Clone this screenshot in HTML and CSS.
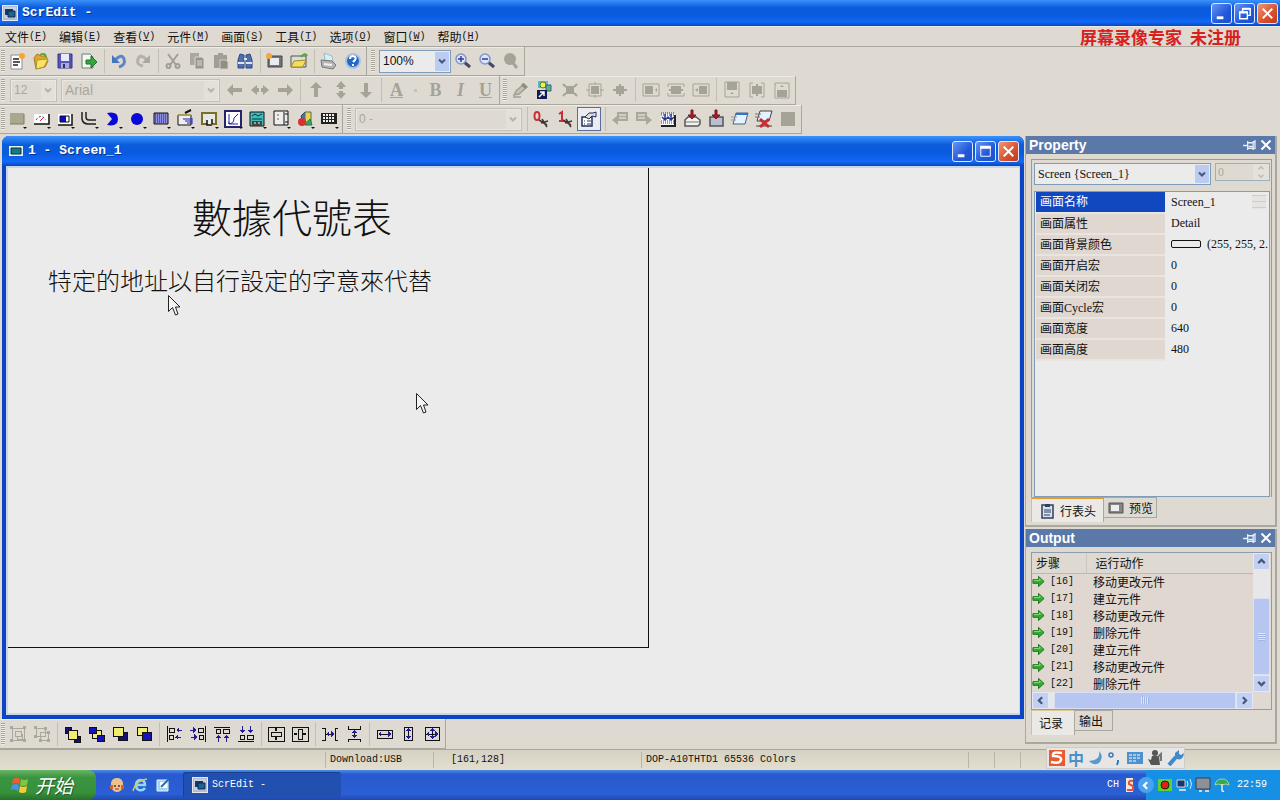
FILE: index.html
```html
<!DOCTYPE html>
<html lang="zh-CN">
<head>
<meta charset="utf-8">
<title>ScrEdit -</title>
<link rel="stylesheet" href="styles.css">
</head>
<body>
<svg class="defs" aria-hidden="true">
  <symbol id="chev" viewBox="0 0 10 10"><path d="M2 3.500 5 6.500 8 3.500" fill="none" stroke="currentColor" stroke-width="2"/></symbol>
  <symbol id="app" viewBox="0 0 16 16"><path d="M0 0h16v16H0z" fill="#e4e8ee"/><path d="M1 1h14v14H1z" fill="#b4bccb"/><path d="M2 2h12v11H2z" fill="#c5d0e0"/><path d="M3 4h8v6H3z" fill="#153b66"/><path d="M6 6h7v6H6z" fill="#1f6394" stroke="#0d2850"/></symbol>
  <symbol id="pin" viewBox="0 0 16 12"><path d="M1 6h5M6 1v10M6 3h6v6H6M12 2v8l2-1V1zM7 7h5" fill="none" stroke="#e8eef8" stroke-width="1.4"/></symbol>
  <symbol id="cross" viewBox="0 0 12 12"><path d="M1.500 1.500 10.500 10.500M10.500 1.500 1.500 10.500" stroke="#fff" stroke-width="2"/></symbol>
  <symbol id="go" viewBox="0 0 14 14"><path d="M1 5h6V1.500L13 7l-6 5.500V9H1z" fill="#2fae2f" stroke="#17701d"/><path d="M2 6h6V4l2 2" fill="none" stroke="#8be07c"/></symbol>
  <symbol id="ptr" viewBox="0 0 13 21"><path d="M.5.500v16l4-4 3 7.500 2.500-1L7.500 12H12z" fill="#f4f4f4" stroke="#222"/></symbol>
  <symbol id="left" viewBox="0 0 20 20"><path d="M2 10 8 4v4h9v4H8v4z" fill="#a5a297"/></symbol>
  <symbol id="note" viewBox="0 0 20 20"><path d="M7 3h11v9H8v4l-6-5 5-4z" fill="#aaa79d"/><path d="M9 6h7M9 9h7" stroke="#dedad2" stroke-width="1.500"/></symbol>
  <symbol id="dl" viewBox="0 0 20 20"><path d="M9 1h2v5h3l-4 4-4-4h3z" fill="#a51a24" stroke="#7c1820"/></symbol>
  <symbol id="mag" viewBox="0 0 20 20"><path d="m11 11 6 5" stroke="#444766" stroke-width="3"/><circle cx="8" cy="8" r="5" fill="#dce6fa" stroke="#8593ce" stroke-width="1.500"/></symbol>
</svg>

<header class="titlebar">
  <svg class="i16"><use href="#app"/></svg>
  <h1>ScrEdit -</h1>
  <div class="winbtns">
    <button class="wb" aria-label="最小化"><svg viewBox="0 0 20 20"><path d="M5 13h7v3H5z" fill="#fff"/></svg></button>
    <button class="wb" aria-label="还原"><svg viewBox="0 0 20 20"><path d="M8 8V5h8v7h-3M5 8.500h8v7H5z" fill="none" stroke="#fff" stroke-width="1.500"/><path d="M5 9h8M8 5h8" stroke="#fff" stroke-width="2"/></svg></button>
    <button class="wb close" aria-label="关闭"><svg viewBox="0 0 20 20"><path d="m5 5 10 10M15 5 5 15" stroke="#fff" stroke-width="2"/></svg></button>
  </div>
</header>

<nav class="menubar">
  <button>文件<span>(<u>F</u>)</span></button>
  <button>编辑<span>(<u>E</u>)</span></button>
  <button>查看<span>(<u>V</u>)</span></button>
  <button>元件<span>(<u>M</u>)</span></button>
  <button>画面<span>(<u>S</u>)</span></button>
  <button>工具<span>(<u>T</u>)</span></button>
  <button>选项<span>(<u>O</u>)</span></button>
  <button>窗口<span>(<u>W</u>)</span></button>
  <button>帮助<span>(<u>H</u>)</span></button>
  <strong class="mark"><span>屏幕录像专家</span> <span>未注册</span></strong>
</nav>

<div class="bars">
<div class="bar">
  <div class="tb"><i class="grip"></i>
    <button aria-label="新建"><svg viewBox="0 0 20 20"><path d="M4 4h11v14H4z" fill="#fff" stroke="#888c99"/><path d="M6 8h6M6 11h7M6 14h5" stroke="#222" stroke-width="1.500"/><circle cx="15" cy="5" r="3" fill="#f4a634"/></svg></button>
    <button aria-label="打开"><svg viewBox="0 0 20 20"><path d="m3 7 3-4 4 2 5 0 2 5-3 6-9 2z" fill="#e0a62c" stroke="#a87d20"/><path d="m6 9 11-1-4 8-8 2z" fill="#f7e26a" stroke="#b69528"/><path d="M9 4q5-3 6 2" fill="none" stroke="#54a53c" stroke-width="2"/></svg></button>
    <button aria-label="保存"><svg viewBox="0 0 20 20"><path d="M3 3h14v14H3z" fill="#5656b4" stroke="#333587"/><path d="M6 3h8v7H6z" fill="#e8eaf8"/><path d="M6 12h8v5H6z" fill="#a8abd8"/><path d="M8 13h2v4H8z" fill="#30316b"/></svg></button>
    <button aria-label="导出"><svg viewBox="0 0 20 20"><path d="M3 3h8l3 3v11H3z" fill="#f4f7f2" stroke="#5f8570"/><path d="M7 9h5V5l6 6-6 6v-4H7z" fill="#35a53c" stroke="#1f702d"/></svg></button>
    <i class="sep"></i>
    <button aria-label="撤消"><svg viewBox="0 0 20 20"><path d="M6 9q7-7 9-1t-5 8" fill="none" stroke="#5b86cb" stroke-width="3"/><path d="M3 4v8h8z" fill="#4675c0"/></svg></button>
    <button aria-label="重做"><svg viewBox="0 0 20 20"><path d="M14 9Q7 2 5 8t5 7" fill="none" stroke="#b4b1a8" stroke-width="3"/><path d="M17 4v8H9z" fill="#aaa79e"/></svg></button>
    <i class="sep"></i>
    <button aria-label="剪切"><svg viewBox="0 0 20 20"><path d="m5 3 8 11M15 3 7 14" stroke="#a19e95" stroke-width="2"/><circle cx="5.500" cy="15" r="2" fill="none" stroke="#a19e95" stroke-width="2"/><circle cx="14.500" cy="15" r="2" fill="none" stroke="#a19e95" stroke-width="2"/></svg></button>
    <button aria-label="复制"><svg viewBox="0 0 20 20"><path d="M3 2h9v12H3z" fill="#aaa79e"/><path d="M8 6h7l2 2v10H8z" fill="#98958c" stroke="#dad7ce"/><path d="M10 10h5M10 12h5M10 14h5" stroke="#dad7ce"/></svg></button>
    <button aria-label="粘贴"><svg viewBox="0 0 20 20"><path d="M3 4h13v13H3zM7 2h5v3H7z" fill="#a19e95"/><path d="M9 9h6l2 2v7H9z" fill="#918e85" stroke="#d0cdc4"/></svg></button>
    <button aria-label="查找"><svg viewBox="0 0 20 20"><path d="m5 3 4 1v13H3V9zM15 3l-4 1v13h6V9z" fill="#506fae" stroke="#2c4984"/><path d="M3 12h6M11 12h6M9 8h3" stroke="#dce6fa" stroke-width="2"/></svg></button>
    <i class="sep"></i>
    <button aria-label="新建画面"><svg viewBox="0 0 20 20"><path d="M3 5h14v11H3z" fill="#74767c" stroke="#444"/><path d="M5 7h9v7H5z" fill="#e9ebf0"/><circle cx="4" cy="5" r="3" fill="#efa93e"/></svg></button>
    <button aria-label="打开画面"><svg viewBox="0 0 20 20"><path d="M2 5h15v11H2z" fill="#ddd" stroke="#555"/><path d="m5 10 12-1-3 7H2z" fill="#f3dc5e" stroke="#a08a28"/><path d="M12 6q4-5 6-1" fill="none" stroke="#54a53c" stroke-width="2"/></svg></button>
    <i class="sep"></i>
    <button aria-label="打印"><svg viewBox="0 0 20 20"><path d="m5 2 8 3 1 6-8-2z" fill="#d9edf4" stroke="#9dbac4"/><path d="m2 9 11 1 4 4-3 4-11-2z" fill="#b5b6b0" stroke="#777"/><path d="m5 13 8 1" stroke="#f0f0f0" stroke-width="2"/></svg></button>
    <button aria-label="帮助"><svg viewBox="0 0 20 20"><circle cx="10" cy="10" r="7" fill="#2467c5" stroke="#a9c2e4" stroke-width="2"/><path d="M7 8q0-3 3-3 4 1 2 4l-2 2M10 13v2" fill="none" stroke="#fff" stroke-width="2"/></svg></button>
  </div>
  <div class="tb"><i class="grip"></i>
    <label class="combo zoomsel"><select aria-label="缩放"><option>100%</option></select><span class="arr"><svg><use href="#chev"/></svg></span></label>
    <button aria-label="放大"><svg viewBox="0 0 20 20"><use href="#mag"/><path d="M5 8h6M8 5v6" stroke="#333a8c" stroke-width="1.500"/></svg></button>
    <button aria-label="缩小"><svg viewBox="0 0 20 20"><use href="#mag"/><path d="M5 8h6" stroke="#333a8c" stroke-width="1.500"/></svg></button>
    <button aria-label="还原缩放"><svg viewBox="0 0 20 20"><circle cx="9" cy="8" r="6" fill="#a5a297"/><path d="m12 12 4 5" stroke="#a5a297" stroke-width="3"/></svg></button>
  </div>
</div>

<div class="bar wide">
  <div class="tb"><i class="grip"></i>
    <label class="combo off size"><select disabled aria-label="字号"><option>12</option></select><span class="arr"><svg><use href="#chev"/></svg></span></label>
    <label class="combo off face"><select disabled aria-label="字体"><option>Arial</option></select><span class="arr"><svg><use href="#chev"/></svg></span></label>
    <button aria-label="左"><svg><use href="#left"/></svg></button>
    <button aria-label="水平居中"><svg viewBox="0 0 20 20"><path d="m1 10 6-5v3h2v4H7v3zM19 10l-6-5v3h-2v4h2v3z" fill="#a5a297"/></svg></button>
    <button aria-label="右"><svg class="flip"><use href="#left"/></svg></button>
    <i class="sep"></i>
    <button aria-label="上"><svg class="cw"><use href="#left"/></svg></button>
    <button aria-label="垂直居中"><svg viewBox="0 0 20 20"><path d="m10 1 5 6h-3v2H8V7H5zM10 19l-5-6h3v-2h4v2h3z" fill="#a5a297"/></svg></button>
    <button aria-label="下"><svg class="ccw"><use href="#left"/></svg></button>
    <i class="sep"></i>
    <button class="let under">A</button><i class="dot"></i>
    <button class="let">B</button><button class="let it">I</button><button class="let under">U</button>
  </div>
  <div class="tb"><i class="grip"></i>
    <button aria-label="画笔"><svg viewBox="0 0 20 20"><path d="m4 15 2-4 8-7 3 3-8 7zM3 17h8" fill="#c4c1b7" stroke="#a19e95" stroke-width="1.500"/><path d="m12 4 4 4" stroke="#8d8a81" stroke-width="3"/></svg></button>
    <button aria-label="图片"><svg viewBox="0 0 20 20"><path d="M3 1h10v7H3z" fill="#54b8d0"/><circle cx="8" cy="5" r="3" fill="#f4ec4d" stroke="#508526"/><path d="M11 5h5v6h-5z" fill="#65b35a" stroke="#2863ad"/><path d="M2 10h10v9H2z" fill="#111a53"/><path d="m4 17 5-5M5 12h4v4" fill="none" stroke="#fff" stroke-width="1.500"/></svg></button>
    <button aria-label="缩放框"><svg viewBox="0 0 20 20"><path d="M6 6h8v8H6z" fill="#a5a297"/><path d="m3 4 3 3M17 4l-3 3M3 16l3-3M17 16l-3-3" stroke="#a5a297" stroke-width="2"/></svg></button>
    <button aria-label="外框"><svg viewBox="0 0 20 20"><path d="M6 6h8v8H6z" fill="#a5a297"/><path d="M4 4h12v12H4zM10 2v3M10 15v3M1 10h4M15 10h4" fill="none" stroke="#a5a297"/></svg></button>
    <button aria-label="居中"><svg viewBox="0 0 20 20"><path d="M6 6h8v8H6z" fill="#a5a297"/><path d="M10 4v12M3 10h14" stroke="#a5a297" stroke-width="2"/></svg></button>
    <i class="sep"></i>
    <button aria-label="靠左"><svg viewBox="0 0 20 20"><path d="M2 4h16v12H2z" fill="none" stroke="#a5a297"/><path d="M4 6h8v8H4zM14 10l2-2v4z" fill="#a5a297"/></svg></button>
    <button aria-label="水平中"><svg viewBox="0 0 20 20"><path d="M2 7V4h16v3M2 13v3h16v-3" fill="none" stroke="#a5a297"/><path d="M5 6h10v8H5zM3 9h14v2H3z" fill="#a5a297"/></svg></button>
    <button aria-label="靠右"><svg viewBox="0 0 20 20"><path d="M2 4h16v12H2z" fill="none" stroke="#a5a297"/><path d="M8 6h8v8H8zM4 10l3-2v4z" fill="#a5a297"/></svg></button>
    <i class="sep"></i>
    <button aria-label="靠上"><svg viewBox="0 0 20 20"><path d="M3 2h14v15H3z" fill="none" stroke="#a5a297"/><path d="M5 2h10v8H5zM10 12l2 2H8z" fill="#a5a297"/></svg></button>
    <button aria-label="垂直中"><svg viewBox="0 0 20 20"><path d="M6 3H3v14h3M14 3h3v14h-3" fill="none" stroke="#a5a297"/><path d="M5 6h10v8H5zM9 4h2v12H9z" fill="#a5a297"/></svg></button>
    <button aria-label="靠下"><svg viewBox="0 0 20 20"><path d="M3 3h14v15H3z" fill="none" stroke="#a5a297"/><path d="M5 10h10v7H5zM10 5l2 2H8z" fill="#a5a297"/></svg></button>
  </div>
</div>

<div class="bar">
  <div class="tb elems"><i class="grip"></i>
    <button aria-label="按钮"><svg viewBox="0 0 20 20"><path d="M3 4h14v11H3z" fill="#aaa78f"/><path d="M3 15h14V5" fill="none" stroke="#7c7a66"/></svg></button>
    <button aria-label="仪表"><svg viewBox="0 0 20 20"><path d="M3 5h14v10H3z" fill="#fff"/><path d="M3 15h15V5" fill="none" stroke="#111" stroke-width="1.500"/><path d="M5 11q5-7 10 0" fill="none" stroke="#338" stroke-dasharray="2"/><path d="m9 12 4-4" stroke="#d22"/></svg></button>
    <button aria-label="棒状图"><svg viewBox="0 0 20 20"><path d="M3 5h14v11H3z" fill="#fff"/><path d="M3 16h14V5" fill="none" stroke="#111" stroke-width="1.500"/><path d="M5 7h6v6H5z" fill="#0808d8"/><path d="M5 7h9v6H5z" fill="none" stroke="#111"/></svg></button>
    <button aria-label="管道"><svg viewBox="0 0 20 20"><path d="M3 3v7q1 5 6 5h8M7 3v5q0 3 3 3h7" fill="none" stroke="#222" stroke-width="1.500"/></svg></button>
    <button aria-label="饼图"><svg viewBox="0 0 20 20"><path d="M4 4q11-2 11 6t-11 6l5-6z" fill="#0808d8"/></svg></button>
    <button aria-label="指示灯"><svg viewBox="0 0 20 20"><circle cx="10" cy="10" r="6" fill="#0808d8"/></svg></button>
    <button aria-label="数据"><svg viewBox="0 0 20 20"><path d="M3 4h14v11H3z" fill="#8d8ddd" stroke="#111"/><path d="M4 5h12M4 7h12M4 9h12M4 11h12M4 13h12" stroke="#1717bb" stroke-dasharray="1"/></svg></button>
    <button aria-label="输入"><svg viewBox="0 0 20 20"><path d="M3 6h13v10H3z" fill="#eee" stroke="#111"/><path d="M3 6h13" stroke="#ccc93b"/><path d="m10 4 6-3" stroke="#111" stroke-width="2"/><path d="M8 10h10M10 12h8M12 14h6" stroke="#2020b8"/></svg></button>
    <button aria-label="显示"><svg viewBox="0 0 20 20"><path d="M3 4h14v11H3z" fill="#e6e6e6" stroke="#77702a" stroke-width="2"/><path d="M8 10h5v7H8z" fill="#eee"/><path d="M8 11v5h5M13 10v5" fill="none" stroke="#111" stroke-width="1.500"/></svg></button>
    <button aria-label="曲线"><svg viewBox="0 0 20 20"><path d="M2 2h16v16H2z" fill="#fff" stroke="#24246a" stroke-width="2"/><path d="M5 14q6 2 6-5l4-4M6 5v10h9" fill="none" stroke="#25259d"/></svg></button>
    <button aria-label="历史"><svg viewBox="0 0 20 20"><path d="M3 3h14v14H3z" fill="#41bdb6" stroke="#111"/><path d="m5 7 3-2 3 2 4-2M5 10h10" fill="none" stroke="#035"/><path d="M5 12h10v5H5z" fill="#444"/><path d="M7 14h2M11 14h2" stroke="#fff"/></svg></button>
    <button aria-label="刻度"><svg viewBox="0 0 20 20"><path d="M3 2h14v14H3z" fill="#eee" stroke="#111"/><path d="M7 5v8" stroke="#a44" stroke-dasharray="2"/><path d="M13 3v13M14 5h3M14 13h3" stroke="#111"/></svg></button>
    <button aria-label="图形"><svg viewBox="0 0 20 20"><path d="m6 7 4-4 2 4-3 8z" fill="#297bd4" stroke="#246"/><path d="M10 3h6v10h-6z" fill="#e3d34e" stroke="#665"/><circle cx="7" cy="13" r="4" fill="#d63230"/><path d="m10 16 5-6 2 6z" fill="#38aa62" stroke="#274"/></svg></button>
    <button aria-label="键盘"><svg viewBox="0 0 20 20"><path d="M2 4h16v11H2z" fill="#222"/><path d="M4 6h12M4 9h12M4 12h12" stroke="#eee" stroke-width="2" stroke-dasharray="2 1"/></svg></button>
  </div>
  <div class="tb"><i class="grip"></i>
    <label class="combo off state"><select disabled aria-label="状态"><option>0 -</option></select><span class="arr"><svg><use href="#chev"/></svg></span></label>
    <i class="sep gap"></i>
    <button aria-label="状态 0"><svg viewBox="0 0 20 20"><ellipse cx="6" cy="7" rx="2.500" ry="4" fill="none" stroke="#c92f38" stroke-width="2"/><path d="m8 11 8 5M10 14l7-2M11 10l5 8" stroke="#433" stroke-width="1.500"/></svg></button>
    <button aria-label="状态 1"><svg viewBox="0 0 20 20"><path d="M4 5l3-2v9M4 12h6" fill="none" stroke="#c92f38" stroke-width="2"/><path d="m8 11 8 5M10 14l7-2M11 10l5 8" stroke="#433" stroke-width="1.500"/></svg></button>
    <button class="on" aria-label="属性"><svg viewBox="0 0 20 20"><path d="M3 8h10v9H3z" fill="#fff" stroke="#24305c" stroke-width="1.500"/><path d="m6 8 4-4h4l3-1v5l-4-1-3 3z" fill="#ddd" stroke="#24305c"/><path d="M5 12h1M8 12h4M5 15h1M8 15h4" stroke="#24305c"/></svg></button>
    <i class="sep"></i>
    <button aria-label="上一个"><svg><use href="#note"/></svg></button>
    <button aria-label="下一个"><svg class="flip"><use href="#note"/></svg></button>
    <button aria-label="编译"><svg viewBox="0 0 20 20"><path d="M3 5h14v12H3z" fill="#fff"/><path d="M3 17h14V6" fill="none" stroke="#222" stroke-width="2"/><path d="M3 4h13M3 6h13M3 12h13M3 14h13" stroke="#335" stroke-dasharray="1"/><path d="M7 5v6M13 5v6M4 8l3 3 3-3 3 3 3-3" fill="none" stroke="#26358e" stroke-width="1.500"/></svg></button>
    <button aria-label="下载全部"><svg viewBox="0 0 20 20"><path d="m3 11 3-3h8l4 3v4l-2 2H3z" fill="#f2f2f0" stroke="#555" stroke-width="1.500"/><path d="M3 13h14" stroke="#777"/><use href="#dl"/></svg></button>
    <button aria-label="下载画面"><svg viewBox="0 0 20 20"><path d="M4 8h13v9H4z" fill="#b9bfd0" stroke="#555" stroke-width="1.500"/><use href="#dl"/></svg></button>
    <button aria-label="在线模拟"><svg viewBox="0 0 20 20"><path d="M6 4h12l-3 11H3z" fill="#e7f2ff" stroke="#47627f"/><path d="M6 5h12" stroke="#2878d2" stroke-width="2"/><path d="M1 8h6M1 11h5" stroke="#999"/></svg></button>
    <button aria-label="离线模拟"><svg viewBox="0 0 20 20"><path d="M6 2h12l-3 10H3zM2 17h16" fill="#e7f2ff" stroke="#444"/><path d="M1 5h6M1 8h5" stroke="#777"/><path d="m6 10 9 8M15 10l-9 8" stroke="#c72c30" stroke-width="3"/></svg></button>
    <button aria-label="停止"><svg viewBox="0 0 20 20"><path d="M3 3h14v14H3z" fill="#a5a297"/></svg></button>
  </div>
</div>
</div>

<main class="work">
  <div class="leftcol">
    <section class="child">
      <header class="childbar">
        <svg class="i16" viewBox="0 0 16 16"><path d="M1 3h14v10H1z" fill="#d9f2fa"/><path d="M3 5h10v6H3z" fill="#167b84" stroke="#133"/></svg>
        <h2>1 - Screen_1</h2>
        <div class="winbtns">
          <button class="wb" aria-label="最小化画面"><svg viewBox="0 0 20 20"><path d="M5 13h7v3H5z" fill="#fff"/></svg></button>
          <button class="wb" aria-label="最大化画面"><svg viewBox="0 0 20 20"><path d="M5 5h10v10H5z" fill="none" stroke="#fff"/><path d="M4.500 5.500h11" stroke="#fff" stroke-width="3"/></svg></button>
          <button class="wb close" aria-label="关闭画面"><svg viewBox="0 0 20 20"><path d="m5 5 10 10M15 5 5 15" stroke="#fff" stroke-width="2"/></svg></button>
        </div>
      </header>
      <div class="canvas">
        <div class="screen" lang="zh-TW">
          <p class="big">數據代號表</p>
          <p class="small">特定的地址以自行設定的字意來代替</p>
          <svg class="ptr p1"><use href="#ptr"/></svg>
          <svg class="ptr p2"><use href="#ptr"/></svg>
        </div>
      </div>
    </section>
    <div class="bar bottom">
      <div class="tb px"><i class="grip"></i>
        <button aria-label="组合"><svg viewBox="0 0 20 20"><path d="M4 4h12v12H4zM7 7h6v5H7zM9 12v3h5v-5" fill="none" stroke="#aaa79d"/><path d="M2 2h3v3H2zM15 2h3v3h-3zM2 15h3v3H2zM15 15h3v3h-3z" fill="#aaa79d"/></svg></button>
        <button aria-label="解组"><svg viewBox="0 0 20 20"><path d="M4 4h9v8H4zM8 8h8v8H8z" fill="none" stroke="#aaa79d"/><path d="M2 2h3v3H2zM12 3h3v3h-3zM2 11h3v3H2zM15 15h3v3h-3zM7 15h3v3H7zM15 7h3v3h-3z" fill="#aaa79d"/></svg></button>
        <i class="sep"></i>
        <button aria-label="移到最前"><svg viewBox="0 0 20 20"><path d="M3 3h6v6H3zM12 12h6v6h-6z" fill="#15107c" stroke="#111"/><path d="M6 6h9v9H6z" fill="#f1ed70" stroke="#111"/></svg></button>
        <button aria-label="移到最后"><svg viewBox="0 0 20 20"><path d="M6 6h9v8H6z" fill="#f1ed70" stroke="#111"/><path d="M3 3h7v6H3zM11 11h7v6h-7z" fill="#1512b8" stroke="#111"/></svg></button>
        <button aria-label="上移"><svg viewBox="0 0 20 20"><path d="M8 8h9v8H8z" fill="#15107c" stroke="#111"/><path d="M3 3h10v9H3z" fill="#f1ed70" stroke="#111"/></svg></button>
        <button aria-label="下移"><svg viewBox="0 0 20 20"><path d="M3 3h10v8H3z" fill="#f1ed70" stroke="#111"/><path d="M8 8h9v8H8z" fill="#1512b8" stroke="#111"/></svg></button>
        <i class="sep"></i>
        <button aria-label="左对齐"><svg viewBox="0 0 20 20"><path d="M3 2v16M5 4h5v4H5zM5 11h4v4H5z" fill="none" stroke="#111"/><path d="M13 6h5M11 13h6" stroke="#231b91"/><path d="m12 6 3-3v6zM11 13l3-3v6z" fill="#231b91"/></svg></button>
        <button aria-label="右对齐"><svg viewBox="0 0 20 20"><path d="M17 2v16M10 4h5v4h-5zM11 11h4v4h-4z" fill="none" stroke="#111"/><path d="M2 6h5M3 13h6" stroke="#231b91"/><path d="m8 6-3-3v6zM9 13l-3-3v6z" fill="#231b91"/></svg></button>
        <button aria-label="上对齐"><svg viewBox="0 0 20 20"><path d="M2 3h16M4 5h4v4H4zM11 5h6v4h-6z" fill="none" stroke="#111"/><path d="M6 12v6M14 12v6" stroke="#231b91"/><path d="m6 11-3 3h6zM14 11l-3 3h6z" fill="#231b91"/></svg></button>
        <button aria-label="下对齐"><svg viewBox="0 0 20 20"><path d="M2 17h16M4 11h4v4H4zM11 11h6v4h-6z" fill="none" stroke="#111"/><path d="M6 2v6M14 2v6" stroke="#231b91"/><path d="m6 9-3-3h6zM14 9l-3-3h6z" fill="#231b91"/></svg></button>
        <i class="sep"></i>
        <button aria-label="垂直置中"><svg viewBox="0 0 20 20"><path d="M2 3h16v14H2zM5 8h10v4H5z" fill="none" stroke="#111"/><path d="M10 4v3M10 13v3" stroke="#111" stroke-width="2"/></svg></button>
        <button aria-label="水平置中"><svg viewBox="0 0 20 20"><path d="M2 3h16v14H2zM8 5h4v10H8z" fill="none" stroke="#111"/><path d="M4 10h3M13 10h3" stroke="#111" stroke-width="2"/></svg></button>
        <i class="sep"></i>
        <button aria-label="等水平间距"><svg viewBox="0 0 20 20"><path d="M2 4h3v12H2M18 4h-3v12h3M6 10h8" fill="none" stroke="#111"/><path d="m6 10 3-3v6zM14 10l-3-3v6z" fill="#231b91"/></svg></button>
        <button aria-label="等垂直间距"><svg viewBox="0 0 20 20"><path d="M4 2v3h12V2M4 18v-3h12v3M10 6v8" fill="none" stroke="#111"/><path d="m10 6-3 3h6zM10 14l-3-3h6z" fill="#231b91"/></svg></button>
        <i class="sep"></i>
        <button aria-label="等宽"><svg viewBox="0 0 20 20"><path d="M3 6h15v8H3zM5 10h10" fill="none" stroke="#111"/><path d="m4 10 3-3v6zM17 10l-3-3v6z" fill="#231b91"/></svg></button>
        <button aria-label="等高"><svg viewBox="0 0 20 20"><path d="M6 3h8v13H6zM10 5v10" fill="none" stroke="#111"/><path d="m10 4-3 3h6zM10 15l-3-3h6z" fill="#231b91"/></svg></button>
        <button aria-label="等大小"><svg viewBox="0 0 20 20"><path d="M3 3h14v13H3zM4 10h12M10 5v10" fill="none" stroke="#111"/><path d="m4 10 3-3v6zM16 10l-3-3v6zM10 4 8 7h5zM10 15l-2-3h5z" fill="#231b91"/></svg></button>
      </div>
    </div>
  </div>

  <aside class="dock">
    <section class="panel grow">
      <header class="cap"><h2>Property</h2><button aria-label="固定属性"><svg class="pin"><use href="#pin"/></svg></button><button aria-label="关闭属性"><svg class="x"><use href="#cross"/></svg></button></header>
      <div class="frame props">
        <div class="pick">
          <label class="combo obj"><select aria-label="对象"><option>Screen {Screen_1}</option></select><span class="arr"><svg><use href="#chev"/></svg></span></label>
          <div class="spin"><input type="text" value="0" disabled aria-label="编号"><span><svg class="flipv"><use href="#chev"/></svg><svg><use href="#chev"/></svg></span></div>
        </div>
        <div class="grid">
          <table>
            <tr class="sel"><th scope="row">画面名称</th><td><div class="val">Screen_1<span class="more"></span></div></td></tr>
            <tr><th scope="row">画面属性</th><td>Detail</td></tr>
            <tr><th scope="row">画面背景颜色</th><td><div class="val"><span class="swatch"></span>(255, 255, 2.</div></td></tr>
            <tr><th scope="row">画面开启宏</th><td>0</td></tr>
            <tr><th scope="row">画面关闭宏</th><td>0</td></tr>
            <tr><th scope="row">画面Cycle宏</th><td>0</td></tr>
            <tr><th scope="row">画面宽度</th><td>640</td></tr>
            <tr><th scope="row">画面高度</th><td>480</td></tr>
          </table>
        </div>
      </div>
      <div class="tabs">
        <button class="tab cur"><svg viewBox="0 0 16 16"><path d="M3 2h11v13H3z" fill="#d9dfec" stroke="#323e62" stroke-width="1.500"/><path d="M6 1h5v3H6z" fill="#323e62"/><path d="M5 7h7M5 9h7M5 12h6" stroke="#323e62"/></svg>行表头</button>
        <button class="tab"><svg viewBox="0 0 16 16"><path d="M1 3h14v10H1z" fill="#858585" stroke="#555"/><path d="M3 5h8v6H3z" fill="#eee"/></svg>预览</button>
      </div>
    </section>
    <section class="panel out">
      <header class="cap"><h2>Output</h2><button aria-label="固定输出"><svg class="pin"><use href="#pin"/></svg></button><button aria-label="关闭输出"><svg class="x"><use href="#cross"/></svg></button></header>
      <div class="frame log">
        <table>
          <thead><tr><th>步骤</th><th>运行动作</th></tr></thead>
          <tbody>
            <tr><td><svg><use href="#go"/></svg>[16]</td><td>移动更改元件</td></tr>
            <tr><td><svg><use href="#go"/></svg>[17]</td><td>建立元件</td></tr>
            <tr><td><svg><use href="#go"/></svg>[18]</td><td>移动更改元件</td></tr>
            <tr><td><svg><use href="#go"/></svg>[19]</td><td>删除元件</td></tr>
            <tr><td><svg><use href="#go"/></svg>[20]</td><td>建立元件</td></tr>
            <tr><td><svg><use href="#go"/></svg>[21]</td><td>移动更改元件</td></tr>
            <tr><td><svg><use href="#go"/></svg>[22]</td><td>删除元件</td></tr>
          </tbody>
        </table>
        <div class="vs"><button class="sb" aria-label="向上"><svg class="flipv"><use href="#chev"/></svg></button><i></i><b></b><button class="sb" aria-label="向下"><svg><use href="#chev"/></svg></button></div>
        <div class="hs"><button class="sb" aria-label="向左"><svg class="cw"><use href="#chev"/></svg></button><i></i><b></b><button class="sb" aria-label="向右"><svg class="ccw"><use href="#chev"/></svg></button></div>
      </div>
      <div class="tabs">
        <button class="tab cur pale">记录</button>
        <button class="tab">输出</button>
      </div>
    </section>
  </aside>
</main>

<footer class="status">
  <span class="s0"></span><span class="s1">Download:USB</span><span class="s2">[161,128]</span><span class="s3">DOP-A10THTD1 65536 Colors</span><span class="s4"></span><span class="s4"></span><span class="s5"></span>
  <div class="ime">
    <svg viewBox="0 0 18 18"><path d="M1 1h16v16H1z" fill="#e85a32"/><path d="M14 4Q4 2 5 7q9 0 8 4-1 4-10 2" fill="none" stroke="#fff" stroke-width="2.500"/></svg>
    <span>中</span>
    <svg viewBox="0 0 18 18"><path d="M13 2q2 9-10 10 6 6 11 1 4-6-1-11z" fill="#569ad0"/></svg>
    <svg viewBox="0 0 18 18"><circle cx="5" cy="6" r="2" fill="none" stroke="#3c79b4" stroke-width="1.500"/><path d="M12 11v2l-1 3" stroke="#3c79b4" stroke-width="2"/></svg>
    <svg viewBox="0 0 18 18"><path d="M1 3h16v12H1z" fill="#4e91cc"/><path d="M3 6h12M3 9h12M3 12h8" stroke="#fff" stroke-dasharray="3 1"/></svg>
    <svg viewBox="0 0 18 18"><circle cx="9" cy="4" r="3" fill="#555"/><path d="m6 7 7 0 1 9H5l-3-6 3 1z" fill="#555"/><path d="m12 8 3-3v7" fill="none" stroke="#777" stroke-width="2"/></svg>
    <svg viewBox="0 0 18 18"><path d="m3 16 7-8" stroke="#4388cb" stroke-width="4"/><path d="M9 8V4l4-3v4l2 1 3-2q-1 8-7 6z" fill="#4388cb"/></svg>
  </div>
</footer>

<footer class="task">
  <button class="start"><svg viewBox="0 0 20 20"><path d="m3 4q4-3 7 0L9 9Q6 7 2 9z" fill="#ec5d2f"/><path d="m11 4q3 2 7 0l-1 6q-4 2-7 0z" fill="#84c443"/><path d="m2 10q4-2 7 0l-1 6q-4-3-7-1z" fill="#4d90e8"/><path d="m10 11q3 2 7 0l-1 6q-4 2-7 0z" fill="#f6ca3b"/></svg>开始</button>
  <div class="quick">
    <button aria-label="QQ"><svg viewBox="0 0 16 16"><path d="M2 6q1-5 6-5t6 5v4q-2 5-6 5T2 10z" fill="#edc18b"/><path d="M1 8h3v4H1zM12 8h3v4h-3z" fill="#c96531"/><circle cx="6" cy="9" r="1" fill="#532"/><circle cx="10" cy="9" r="1" fill="#532"/><path d="M6 12h4" stroke="#a33"/></svg></button>
    <button aria-label="Internet Explorer"><svg viewBox="0 0 16 16"><path d="M13 11q-2 3-6 2-3-1-3-5t4-5q5 0 5 5H5" fill="none" stroke="#8fd8fb" stroke-width="2.500"/><path d="M1 14Q4 3 15 2" fill="none" stroke="#e0c550" stroke-width="1.500"/></svg></button>
    <button aria-label="显示桌面"><svg viewBox="0 0 16 16"><path d="M2 3h11v11H2z" fill="#9ed3f2" stroke="#e7f6ff"/><path d="M5 5h7v6H5z" fill="#fff"/><path d="m6 10 8-8" stroke="#286cae" stroke-width="2"/></svg></button>
  </div>
  <button class="app"><svg class="i16"><use href="#app"/></svg>ScrEdit -</button>
  <span class="lang">CH</span>
  <svg class="sg" viewBox="0 0 8 16"><path d="M0 1h7v14H0z" fill="#f3e5dc"/><path d="M7 4Q2 3 3 7l4 2v4H1" fill="none" stroke="#d45636" stroke-width="2"/></svg>
  <div class="tray">
    <button class="exp" aria-label="显示图标"><svg class="cw"><use href="#chev"/></svg></button>
    <svg viewBox="0 0 16 16"><path d="M1 2h14v12H1z" fill="#58d52f"/><circle cx="8" cy="8" r="4" fill="#e31f18" stroke="#222"/></svg>
    <svg viewBox="0 0 16 16"><path d="M1 3h8v7H1z" fill="#1b3566" stroke="#c7d7e8"/><path d="M3 13h7" stroke="#c7d7e8" stroke-width="2"/><path d="M11 4q2 3 0 6M14 2q3 5 0 10" fill="none" stroke="#dceaf8"/></svg>
    <svg viewBox="0 0 16 16"><path d="M1 1h14v11H1z" fill="#8c9098" stroke="#353e54"/><path d="M4 14h3M10 14h4" stroke="#d3d5d8" stroke-width="2"/></svg>
    <svg viewBox="0 0 16 16"><path d="M1 8Q2 2 8 2t7 6q-3-2-7 0-4-2-7 0z" fill="#35a853" stroke="#a5d5a0"/><path d="M8 7v6q0 2 2 1" fill="none" stroke="#e7e7e7" stroke-width="1.500"/></svg>
    <time>22:59</time>
  </div>
</footer>
</body>
</html>
```
FILE: styles.css
```css
:root {
  --face: #dedad2;
  --line: #a9a69e;
  --cn: "Noto Sans CJK SC", sans-serif;
  --mono: "Liberation Mono", "Noto Sans CJK SC", monospace;
  --serif: "Liberation Serif", "Noto Sans CJK SC", serif;
}
* { box-sizing: border-box; }
body {
  margin: 0; min-height: 100vh; display: flex; flex-direction: column;
  background: var(--face); color: #111; font: 12px/16px var(--cn);
}
button, select, input { font: inherit; color: inherit; border: 0; padding: 0; background: none; }
h1, h2, p { margin: 0; font-weight: inherit; font-size: inherit; }
svg { display: block; flex: none; }
.defs { width: 0; height: 0; position: absolute; }
.i16 { width: 16px; height: 16px; }

/* window captions */
.titlebar, .childbar {
  display: flex; align-items: center; gap: 4px;
  font: bold 13px/18px var(--mono); color: #fff; text-shadow: 1px 1px #0a2f8c;
  background: linear-gradient(#3b92fa, #0b5bdc 30%, #0b5be0 60%, #1169f6 85%, #0a45bb);
}
.titlebar { height: 26px; padding: 0 2px; }
.winbtns { margin-left: auto; display: flex; gap: 2px; }
.wb { width: 21px; height: 21px; border: 1px solid #dfe9fb; border-radius: 3px; background: linear-gradient(135deg, #6a94f1, #2058dc 60%, #1f4fc4); }
.wb.close { background: linear-gradient(135deg, #ef9577, #d8502c 60%, #b93c1c); }
.wb svg { width: 19px; height: 19px; }

.menubar { display: flex; align-items: center; height: 21px; padding: 0 5px; gap: 12px; border-bottom: 1px solid var(--line); border-top: 1px solid #eceae6; }
.menubar button { white-space: nowrap; display: flex; }
.menubar button span { font-family: var(--mono); font-size: 10px; }
.mark { display: flex; gap: 8px; margin: 0 34px 0 auto; color: #d8201c; font-size: 17px; line-height: 18px; white-space: nowrap; }

/* toolbars */
.bar { display: flex; height: 29px; }
.tb { display: flex; align-items: center; border: solid var(--line); border-width: 0 1px 1px 0; padding-right: 1px; box-shadow: inset 0 1px #eeece8; }
.tb + .tb { padding-left: 3px; }
.tb button { width: 24px; height: 24px; display: grid; place-items: center; flex: none; }
.tb button svg { width: 20px; height: 20px; }
.wide .tb button { width: 25px; }
.wide .tb + .tb { padding-left: 2px; }
.grip { width: 4px; height: 22px; margin-left: 1px; background: repeating-linear-gradient(#a8a59c 0 1px, #efede8 1px 2px); flex: none; }
.sep { width: 1px; height: 24px; margin: 0 2px 0 3px; background: #c1beb5; flex: none; }
.gap { margin-right: 1px; }
.tb .on + .sep { margin-left: 4px; }
.dot { width: 3px; height: 3px; margin: 0 6px 0 5px; background: #c4c1b8; }
.let { font: bold 18px/20px var(--serif); color: #a5a297; }
.let.under { text-decoration: underline; }
.let.it { font-style: italic; }
.tb button.on { border: 1px solid #5a6e9c; background: #ebecf0; }
.elems button { position: relative; }
.elems button::after { content: ""; position: absolute; right: 2px; bottom: 2px; border: solid transparent; border-width: 2px 2px 0; border-top-color: #111; }
.px svg { shape-rendering: crispEdges; }
.flip { transform: scaleX(-1); }
.flipv { transform: scaleY(-1); }
.cw { transform: rotate(90deg); }
.ccw { transform: rotate(-90deg); }

.combo { display: flex; align-items: center; height: 23px; border: 1px solid #7f9db9; background: #ebebeb; padding-right: 1px; }
.combo select { flex: 1; min-width: 0; appearance: none; padding-left: 3px; outline: 0; font-family: "Liberation Sans", sans-serif; font-size: 12px; opacity: 1; }
.arr { width: 14px; align-self: stretch; margin: 1px 0; display: grid; place-items: center; background: #bccbf0; color: #45597f; }
.arr svg { width: 10px; height: 10px; }
.combo.off { background: var(--face); border-color: #c3c0b7; box-shadow: inset 0 0 0 1px #e9e7e2; }
.combo.off select { color: #aaa79e; }
.off .arr { background: #e3e0da; color: #b5b2aa; }
.zoomsel { width: 72px; margin-left: 4px; }
.size { width: 47px; margin: 0 4px 0 5px; }
.face { width: 159px; margin-right: 2px; }
.combo.face select { font-size: 14px; }
.state { width: 167px; margin: 0 2px 0 4px; }

/* workspace */
.work { flex: 1; display: flex; min-height: 0; }
.leftcol { flex: 1; min-width: 0; display: flex; flex-direction: column; }
.child { flex: 1; display: flex; flex-direction: column; margin: 2px 1px 0 2px; padding: 0 4px 4px; background: #0b45c6; border-radius: 7px 7px 0 0; overflow: hidden; }
.childbar { height: 30px; margin: 0 -4px; padding: 0 5px 0 6px; }
.canvas { flex: 1; background: #ebebeb; border: solid #c9d6ea; border-width: 2px 1px 2px 2px; }
.screen { position: relative; width: 641px; height: 480px; border: solid #111; border-width: 0 1px 1px 0; font-family: "Noto Sans CJK TC", sans-serif; font-weight: 300; }
.big { font-size: 40px; line-height: 48px; padding: 24px 0 0 184px; }
.small { font-size: 24px; line-height: 32px; padding: 24px 0 0 40px; }
.ptr { position: absolute; width: 13px; height: 21px; }
.p1 { left: 160px; top: 127px; }
.p2 { left: 408px; top: 225px; }
.bottom { height: 31px; border-bottom: 1px solid var(--line); margin-right: -257px; }
.bottom .grip { margin-right: 1px; }

/* docked panels */
.dock { width: 255px; padding: 2px 3px 6px 0; display: flex; flex-direction: column; gap: 2px; }
.panel { border: 1px solid #aaa79f; border-width: 0 2px 2px 1px; padding-bottom: 3px; display: flex; flex-direction: column; background: var(--face); position: relative; }
.grow { flex: 1; }
.out { padding-bottom: 7px; }
.cap { height: 18px; display: flex; align-items: center; gap: 3px; padding: 0 3px 0 3px; background: #5a78a8; color: #fff; }
.cap h2 { margin-right: auto; font: bold 14px/18px "Liberation Sans", sans-serif; }
.pin { width: 15px; height: 11px; }
.x { width: 12px; height: 12px; }
.frame { margin: 5px 3px 0 5px; border: 1px solid #8c9eac; }
.props { flex: 1; display: flex; flex-direction: column; gap: 6px; padding: 3px 1px 0 2px; border-bottom: 0; font-family: var(--serif); }
.pick { display: flex; gap: 4px; align-items: flex-start; }
.obj { flex: 1; min-width: 0; height: 22px; }
.combo.obj select { font-family: var(--serif); }
.spin { width: 55px; height: 18px; display: flex; border: 1px solid #9db0c0; }
.spin input { flex: 1; min-width: 0; padding-left: 2px; color: #aaa79e; }
.spin span { width: 16px; color: #bdbab2; background: #e4e1db; display: grid; justify-items: center; }
.spin svg { width: 8px; height: 8px; }
.grid { flex: 1; border: 1px solid #7f9db9; background: #ebebeb; padding-left: 1px; overflow: hidden; }
.grid table { width: 100%; table-layout: fixed; border-collapse: collapse; }
.grid th { width: 129px; height: 21px; padding: 0 0 0 4px; text-align: left; font-weight: 400; background: #dfd7d0; border-bottom: 2px solid #e8e4e0; }
.grid td { padding: 0 0 2px 6px; white-space: nowrap; overflow: hidden; }
.grid .sel th { background: #1148c0; color: #fff; }
.val { display: flex; align-items: center; gap: 6px; overflow: hidden; }
.more { width: 14px; height: 14px; margin-left: auto; margin-right: 3px; flex: none; background: repeating-linear-gradient(#d0cdc7 0 1px, #e6e4e0 1px 6px); }
.swatch { width: 30px; height: 8px; border: 1px solid #111; border-radius: 2px; flex: none; }

.tabs { display: flex; align-items: flex-start; padding-left: 5px; }
.tab { display: flex; align-items: center; gap: 5px; height: 21px; padding: 0 3px 0 4px; border: solid #aaa79f; border-width: 1px 1px 1px 0; white-space: nowrap; }
.tab.cur { height: 25px; padding: 0 7px; background: #ebe9e6; border-width: 2px 1px 0; border-color: #e69a2c #aaa79f #ddd #c4c1ba; }
.tab.pale { border-top: 1px solid #ddc99a; padding: 0 11px 0 7px; }
.pale + .tab { padding-right: 9px; }
.tab svg { width: 16px; height: 16px; }

.log { display: grid; grid-template-columns: 1fr 17px; background: var(--face); padding-right: 1px; }
.log table { width: 100%; table-layout: fixed; border-collapse: collapse; }
.log thead th { height: 20px; padding: 0 0 0 4px; line-height: 15px; text-align: left; font-weight: 400; border-bottom: 1px solid #bdb9b0; }
.log thead th:first-child { width: 54px; border-right: 1px solid #cbc7be; }
.log thead th + th { padding-left: 9px; }
.log tbody td { height: 17px; padding: 0 0 0 7px; line-height: 15px; background: #dfd7d0; }
.log tbody td:first-child { padding: 0; font: 10px/15px var(--mono); white-space: nowrap; }
.log tbody td svg { display: inline-block; vertical-align: middle; width: 13px; height: 13px; margin-right: 5px; }
.vs, .hs { display: flex; background: #e7e7ea; }
.vs { flex-direction: column; }
.vs b, .hs b { border: 1px solid #d8e0f6; border-radius: 2px; }
.vs i { flex: 3; }
.vs b { flex: 8; background: repeating-linear-gradient(#dfe6fa 0 1px, #a3b5e6 1px 2px) center / 7px 8px no-repeat #b7c6f0; }
.hs { height: 17px; }
.hs i { width: 5px; }
.hs b { flex: 1; background: repeating-linear-gradient(90deg, #dfe6fa 0 1px, #a3b5e6 1px 2px) center / 8px 7px no-repeat #b7c6f0; }
.sb { width: 17px; height: 17px; display: grid; place-items: center; flex: none; background: #c3d0f2; border: 1px solid #e2e8f6; border-radius: 2px; color: #45597f; }
.sb svg { width: 11px; height: 11px; }

/* status bar */
.status { position: relative; height: 20px; display: flex; align-items: center; background: linear-gradient(#d5d2c4, #e2dfcf); font: 10px/16px var(--mono); white-space: nowrap; }
.status > span { border-right: 1px solid #b9b6a8; height: 16px; padding-left: 4px; }
.s0 { width: 326px; }
.s1 { width: 108px; }
.s3 { flex: 1; }
.status > .s2 { width: 208px; padding-left: 17px; }
.s4 { width: 26px; }
.status > .s5 { width: 259px; border: 0; }
.ime { position: absolute; right: 95px; top: -3px; height: 22px; width: 139px; padding: 0 1px; display: flex; align-items: center; gap: 2px; background: #e7e6e5; border: 1px solid #cfccc6; }
.ime svg { width: 18px; height: 18px; }
.ime span { font: bold 16px/18px var(--cn); color: #4b90c8; }

/* task bar */
.task { height: 30px; display: flex; align-items: center; color: #fff; font: 10px/16px var(--mono); background: linear-gradient(#4d8be6, #2859cf 15%, #2b5fd4 80%, #1d48b0); }
.start { width: 96px; height: 30px; display: flex; align-items: center; gap: 5px; padding-left: 10px; border-radius: 0 8px 8px 0; background: linear-gradient(#6cb566, #3b9440 25%, #37913b 75%, #27702b); font: italic 19px/24px var(--cn); text-shadow: 1px 1px #24592a; }
.start svg { width: 20px; height: 20px; }
.quick { display: flex; gap: 7px; padding: 0 12px 0 13px; }
.quick svg { width: 16px; height: 16px; }
.app { width: 158px; height: 26px; padding-left: 9px; display: flex; align-items: center; gap: 4px; border-radius: 3px; background: #2150b0; box-shadow: inset 1px 1px #17408f; }
.lang { margin-left: auto; }
.sg { width: 8px; height: 16px; margin: 0 4px 0 7px; }
.tray { height: 30px; display: flex; align-items: center; gap: 3px; padding-right: 13px; background: linear-gradient(90deg, transparent 8px, #1690e4 8px); }
.tray > svg { width: 16px; height: 16px; }
.exp { width: 16px; height: 16px; border-radius: 8px; background: #4aa1ee; display: grid; place-items: center; }
.exp svg { width: 11px; height: 11px; }
.tray time { margin-left: 4px; }
```
